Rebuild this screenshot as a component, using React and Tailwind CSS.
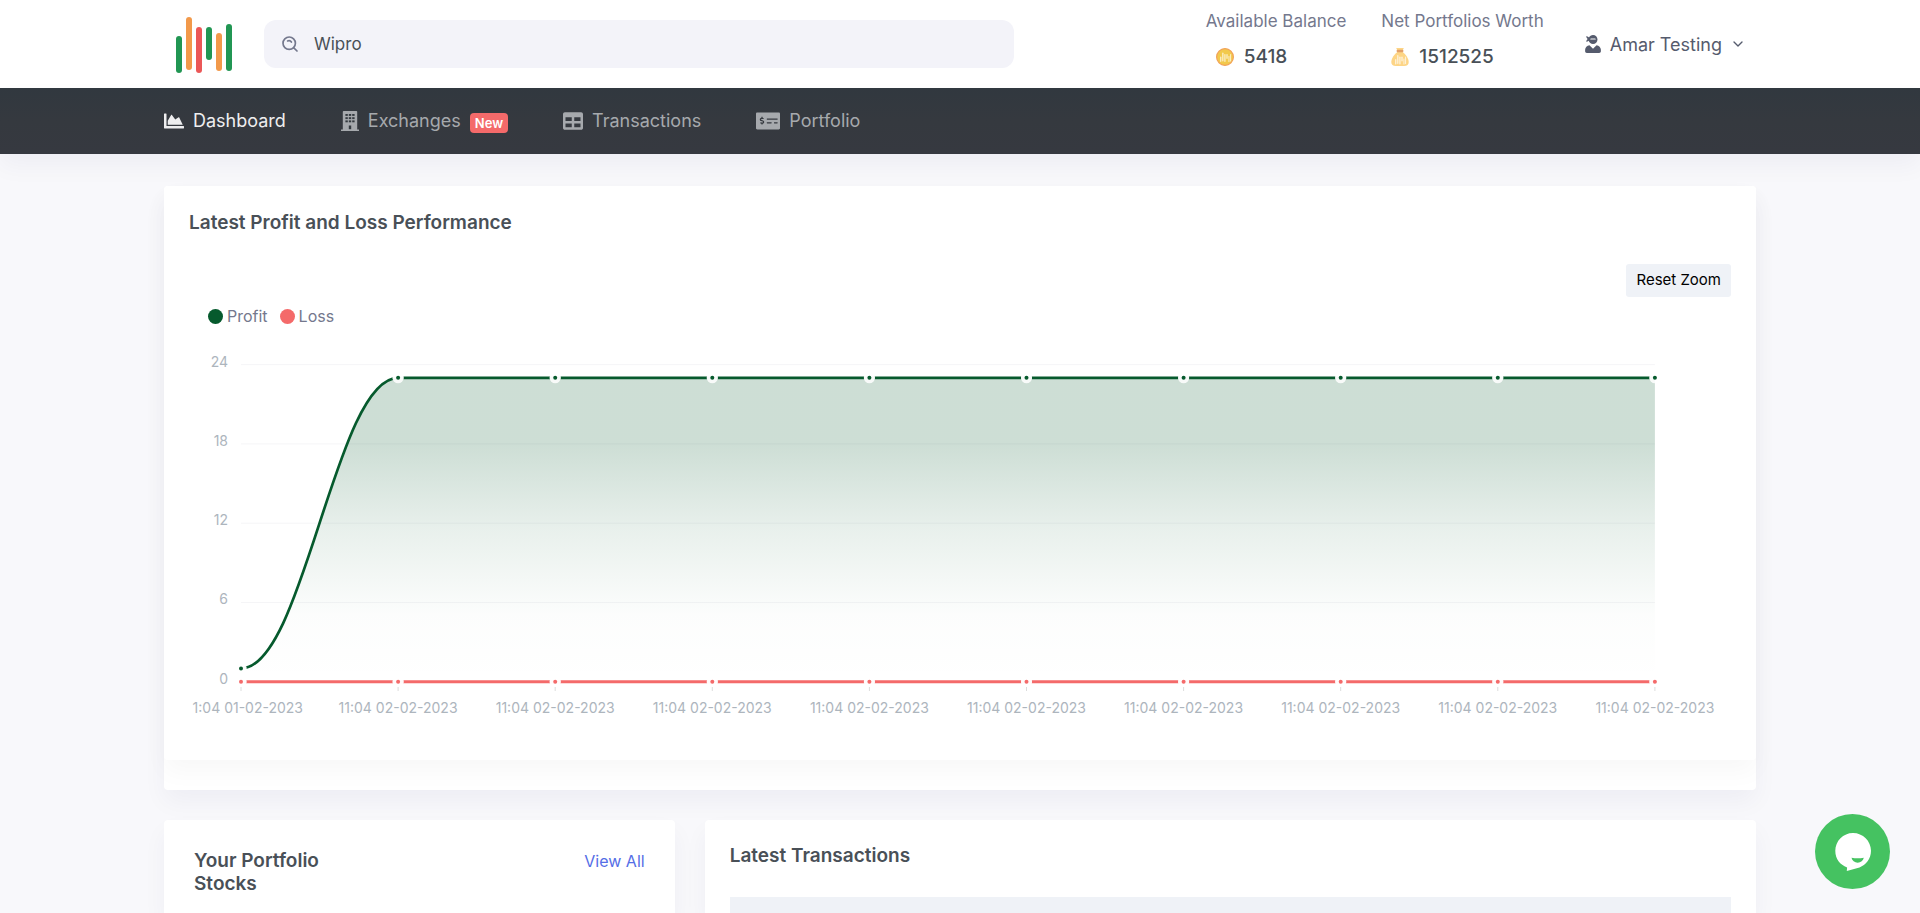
import React from "react";
import { FaChartArea, FaTable, FaMoneyCheckAlt, FaUserNinja } from "react-icons/fa";
import { ChevronDown } from "lucide-react";

const CARD_SHADOW = "shadow-[0_12px_24px_rgba(30,24,90,0.045)]";

function Logo() {
  const bars = [
    [0, 19, 37, "#219653"],
    [10, 0, 53, "#f2994a"],
    [20, 10, 46, "#eb5757"],
    [30, 10, 33, "#219653"],
    [40, 16, 38, "#f2994a"],
    [50, 7, 47, "#219653"],
  ];
  return (
    <svg width="56" height="56" viewBox="0 0 56 56" aria-hidden="true">
      {bars.map(([x, y, h, fill]) => (
        <rect key={x} x={x} y={y} width="6" height={h} rx="3" fill={fill} />
      ))}
    </svg>
  );
}

function SearchIcon() {
  return (
    <svg width="16" height="16" viewBox="0 0 16 16" fill="none" stroke="#74788d" strokeWidth="1.7" strokeLinecap="round" aria-hidden="true">
      <circle cx="7.2" cy="7.2" r="6.2" />
      <path d="M11.8 11.8 15 15" />
      <path d="M5.6 4.9A3 3 0 0 1 9.4 6" />
    </svg>
  );
}

function BuildingIcon() {
  const windows = [];
  for (const y of [3, 6.2, 9.4]) for (const x of [4.4, 7.8, 11.2]) windows.push([x, y]);
  return (
    <svg width="18" height="20" viewBox="0 0 18 20" fill="currentColor" aria-hidden="true">
      <path d="M2.6 0h12.8c.5 0 .8.3.8.8v17.6H18V20H0v-1.600h1.800V.8c0-.5.3-.8.8-.8z" />
      <g fill="#343a40">
        {windows.map(([x, y]) => (
          <rect key={x + "-" + y} x={x} y={y} width="2.400" height="1.900" />
        ))}
        <rect x="7.800" y="14.500" width="2.400" height="3.700" />
      </g>
    </svg>
  );
}

function MiniBars() {
  return (
    <g fill="#fff" fillOpacity="0.65">
      <rect x="4" y="8.500" width="1.400" height="5.500" rx="0.700" />
      <rect x="6.100" y="4.500" width="1.400" height="9" rx="0.700" />
      <rect x="8.200" y="6" width="1.400" height="8" rx="0.700" />
      <rect x="10.300" y="6" width="1.400" height="5" rx="0.700" />
      <rect x="12.400" y="8" width="1.100" height="6" rx="0.500" />
      <rect x="14" y="6" width="1.100" height="7.500" rx="0.500" />
    </g>
  );
}

function CoinIcon() {
  return (
    <svg width="18" height="18" viewBox="0 0 18 18" aria-hidden="true">
      <circle cx="9" cy="9" r="8.400" fill="#f2c94c" stroke="#f2a15a" strokeWidth="1.200" />
      <MiniBars />
    </svg>
  );
}

function BagIcon() {
  return (
    <svg width="18" height="18" viewBox="0 0 18 18" aria-hidden="true">
      <path d="M6.300 4h5.400c3 2.200 6 6.600 6 10 0 2.600-1.500 4-4.500 4H4.800c-3 0-4.500-1.400-4.500-4 0-3.400 3-7.800 6-10z" fill="#fdd586" />
      <path d="M5.200 0h7.600l-1 2.200H6.200z" fill="#fdd586" />
      <rect x="5.700" y="1.700" width="6.600" height="2.500" rx="0.800" fill="#e2a069" />
      <g transform="translate(0 2.500)">
        <MiniBars />
      </g>
    </svg>
  );
}

function Stat({ label, icon, value }) {
  return (
    <div>
      <p className="text-[17px] leading-6 text-[#74788d]">{label}</p>
      <p className="mt-2.5 flex items-center gap-2.5 pl-2.5 text-[19px] leading-7 font-medium text-[#495057]">
        {icon}
        {value}
      </p>
    </div>
  );
}

function NavLink({ icon, children, active, badge }) {
  return (
    <a href="#" className={"flex items-center gap-[9px] text-[18px] leading-7 " + (active ? "text-[#eeeeef]" : "text-[#a6a9ad]")}>
      {icon}
      <span>{children}</span>
      {badge && (
        <span className="mt-1 rounded bg-[#f46a6a] px-[5px] text-[13px] leading-5 font-semibold text-white">{badge}</span>
      )}
    </a>
  );
}

const STEP = 157.1;
const X0 = 52;
const yOf = (v) => 341.700 - v * 13.210;
const profit = [1, 23, 23, 23, 23, 23, 23, 23, 23, 23];
const xs = profit.map((_, i) => X0 + i * STEP);
const linePath = profit.reduce((d, v, i) => {
  if (i === 0) return `M${xs[0]} ${yOf(v)}`;
  const a = xs[i - 1] + STEP * 0.4;
  const b = xs[i] - STEP * 0.4;
  return d + `C${a} ${yOf(profit[i - 1])} ${b} ${yOf(v)} ${xs[i]} ${yOf(v)}`;
}, "");
const xEnd = xs[xs.length - 1];

function Marker({ x, y, color }) {
  return (
    <g>
      <circle cx={x} cy={y} r="5.500" fill="#fff" fillOpacity="0.850" />
      <rect x={x - 5.5} y={y - 2} width="11" height="4" rx="1" fill="#fff" fillOpacity="0.800" />
      <circle cx={x} cy={y} r="2" fill={color} />
    </g>
  );
}

function Chart() {
  return (
    <svg viewBox="0 0 1542 390" className="mt-3 block h-auto w-full" role="img" aria-label="Profit and loss over time">
      <defs>
        <linearGradient id="profitFill" x1="0" y1="0" x2="0" y2="1">
          <stop offset="0" stopColor="#065a2d" stopOpacity="0.2" />
          <stop offset="0.22" stopColor="#065a2d" stopOpacity="0.2" />
          <stop offset="0.5" stopColor="#065a2d" stopOpacity="0.09" />
          <stop offset="0.78" stopColor="#065a2d" stopOpacity="0.012" />
          <stop offset="1" stopColor="#065a2d" stopOpacity="0" />
        </linearGradient>
      </defs>
      {[24, 18, 12, 6].map((v) => (
        <line key={v} x1={X0} x2={xEnd} y1={yOf(v)} y2={yOf(v)} stroke="#f5f5f7" strokeWidth="1" />
      ))}
      <path d={`${linePath}L${xEnd} ${yOf(0)}L${X0} ${yOf(0)}Z`} fill="url(#profitFill)" />
      <path d={linePath} fill="none" stroke="#065a2d" strokeWidth="2.700" />
      <line x1={X0} x2={xEnd} y1={yOf(0)} y2={yOf(0)} stroke="#f46a6a" strokeWidth="2.900" />
      {xs.map((x, i) => (
        <g key={x}>
          <Marker x={x} y={yOf(profit[i])} color="#065a2d" />
          <Marker x={x} y={yOf(0)} color="#f46a6a" />
          <line x1={x} x2={x} y1="347" y2="351" stroke="#dcdcdc" strokeWidth="1" />
        </g>
      ))}
      <g fill="#adb5bd" fontSize="14">
        {[24, 18, 12, 6, 0].map((v) => (
          <text key={v} x="39" y={yOf(v) + 2} textAnchor="end">{v}</text>
        ))}
        <text x="114" y="373" textAnchor="end">1:04 01-02-2023</text>
        {xs.slice(1).map((x) => (
          <text key={x} x={x} y="373" textAnchor="middle">11:04 02-02-2023</text>
        ))}
      </g>
    </svg>
  );
}

function Legend({ color, children }) {
  return (
    <span className="flex items-center gap-1">
      <span className={"size-[15px] rounded-full " + color} />
      {children}
    </span>
  );
}

export default function App() {
  return (
    <div className="flex min-h-screen flex-col bg-[#f8f8fb] font-['Inter','Liberation_Sans',sans-serif] text-[#495057]">
      <header className="bg-white">
        <div className="mx-auto flex h-[88px] w-[85%] items-center px-5">
          <a href="#" aria-label="Home" className="ml-3 shrink-0 pt-0.5">
            <Logo />
          </a>
          <label className="ml-8 flex h-12 w-[750px] min-w-0 items-center gap-4 rounded-xl bg-[#f3f3f9] px-[18px]">
            <SearchIcon />
            <input type="text" aria-label="Search" defaultValue="Wipro" className="h-full min-w-0 flex-1 bg-transparent text-[17px] text-[#495057] outline-none" />
          </label>
          <div className="ml-auto flex shrink-0 items-center">
            <div className="mr-10 flex gap-[35px] pb-2">
              <Stat label="Available Balance" icon={<CoinIcon />} value="5418" />
              <Stat label="Net Portfolios Worth" icon={<BagIcon />} value="1512525" />
            </div>
            <button type="button" className="mr-2.5 flex items-center gap-2 text-[18px] text-[#555b6d]">
              <FaUserNinja size={18} aria-hidden="true" />
              Amar Testing
              <ChevronDown size={16} aria-hidden="true" />
            </button>
          </div>
        </div>
      </header>

      <nav className={"bg-linear-to-b from-[#31383f] via-[#35393f] to-[#363940] " + CARD_SHADOW}>
        <div className="mx-auto flex h-[66px] w-[85%] items-center gap-[55px] px-5">
          <NavLink active icon={<FaChartArea size={20} aria-hidden="true" />}>Dashboard</NavLink>
          <NavLink icon={<BuildingIcon />} badge="New">Exchanges</NavLink>
          <NavLink icon={<FaTable size={20} aria-hidden="true" />}>Transactions</NavLink>
          <NavLink icon={<FaMoneyCheckAlt size={24} aria-hidden="true" />}>Portfolio</NavLink>
        </div>
      </nav>

      <main className="mx-auto flex w-[85%] flex-1 flex-col px-5 pt-8">
        <section className={"rounded bg-white pb-[30px] " + CARD_SHADOW}>
          <div className="rounded bg-white p-[25px] pb-[30px] shadow-[0_12px_24px_rgba(20,20,30,0.03)]">
            <h2 className="text-[19px] leading-6 font-semibold">Latest Profit and Loss Performance</h2>
            <div className="mt-[29px] flex justify-end">
              <button type="button" className="h-[33px] rounded-[3px] bg-[#eff2f7] px-2.5 text-[15px] text-black">Reset Zoom</button>
            </div>
            <div className="mt-[7px] ml-[19px] flex gap-3 text-[16px] leading-6 text-[#74788d]">
              <Legend color="bg-[#065a2d]">Profit</Legend>
              <Legend color="bg-[#f46a6a]">Loss</Legend>
            </div>
            <Chart />
          </div>
        </section>

        <div className="mt-[30px] grid flex-1 grid-cols-3 gap-[30px]">
          <section className={"flex items-start justify-between rounded-t bg-white px-[30px] pt-[29px] " + CARD_SHADOW}>
            <h2 className="w-40 text-[19px] leading-[23px] font-semibold">Your Portfolio Stocks</h2>
            <a href="#" className="text-[16px] leading-6 text-[#556ee6]">View All</a>
          </section>
          <section className={"col-span-2 flex flex-col rounded-t bg-white px-[25px] pt-6 " + CARD_SHADOW}>
            <h2 className="text-[19px] leading-6 font-semibold">Latest Transactions</h2>
            <div className="mt-[29px] flex-1 bg-[#eff2f7]" />
          </section>
        </div>
      </main>

      <button type="button" aria-label="Open chat" className="fixed right-[30px] bottom-6 size-[75px] rounded-full bg-[#45c261]">
        <svg viewBox="0 0 75 75" className="size-full" aria-hidden="true">
          <path d="M38 19c9.900 0 18 8 18 17.800 0 8-5.200 14.200-11.500 16.700L31.800 57l.3-3.600C25 51 20.300 44.800 20.300 36.800 20.300 27 28.200 19 38 19z" fill="#fff" />
          <path d="M36.500 43.800c4 .7 8.300.7 12.300 0-.6 3-3 4.900-6.100 4.900s-5.600-1.900-6.200-4.900z" fill="#45c261" />
        </svg>
      </button>
    </div>
  );
}
